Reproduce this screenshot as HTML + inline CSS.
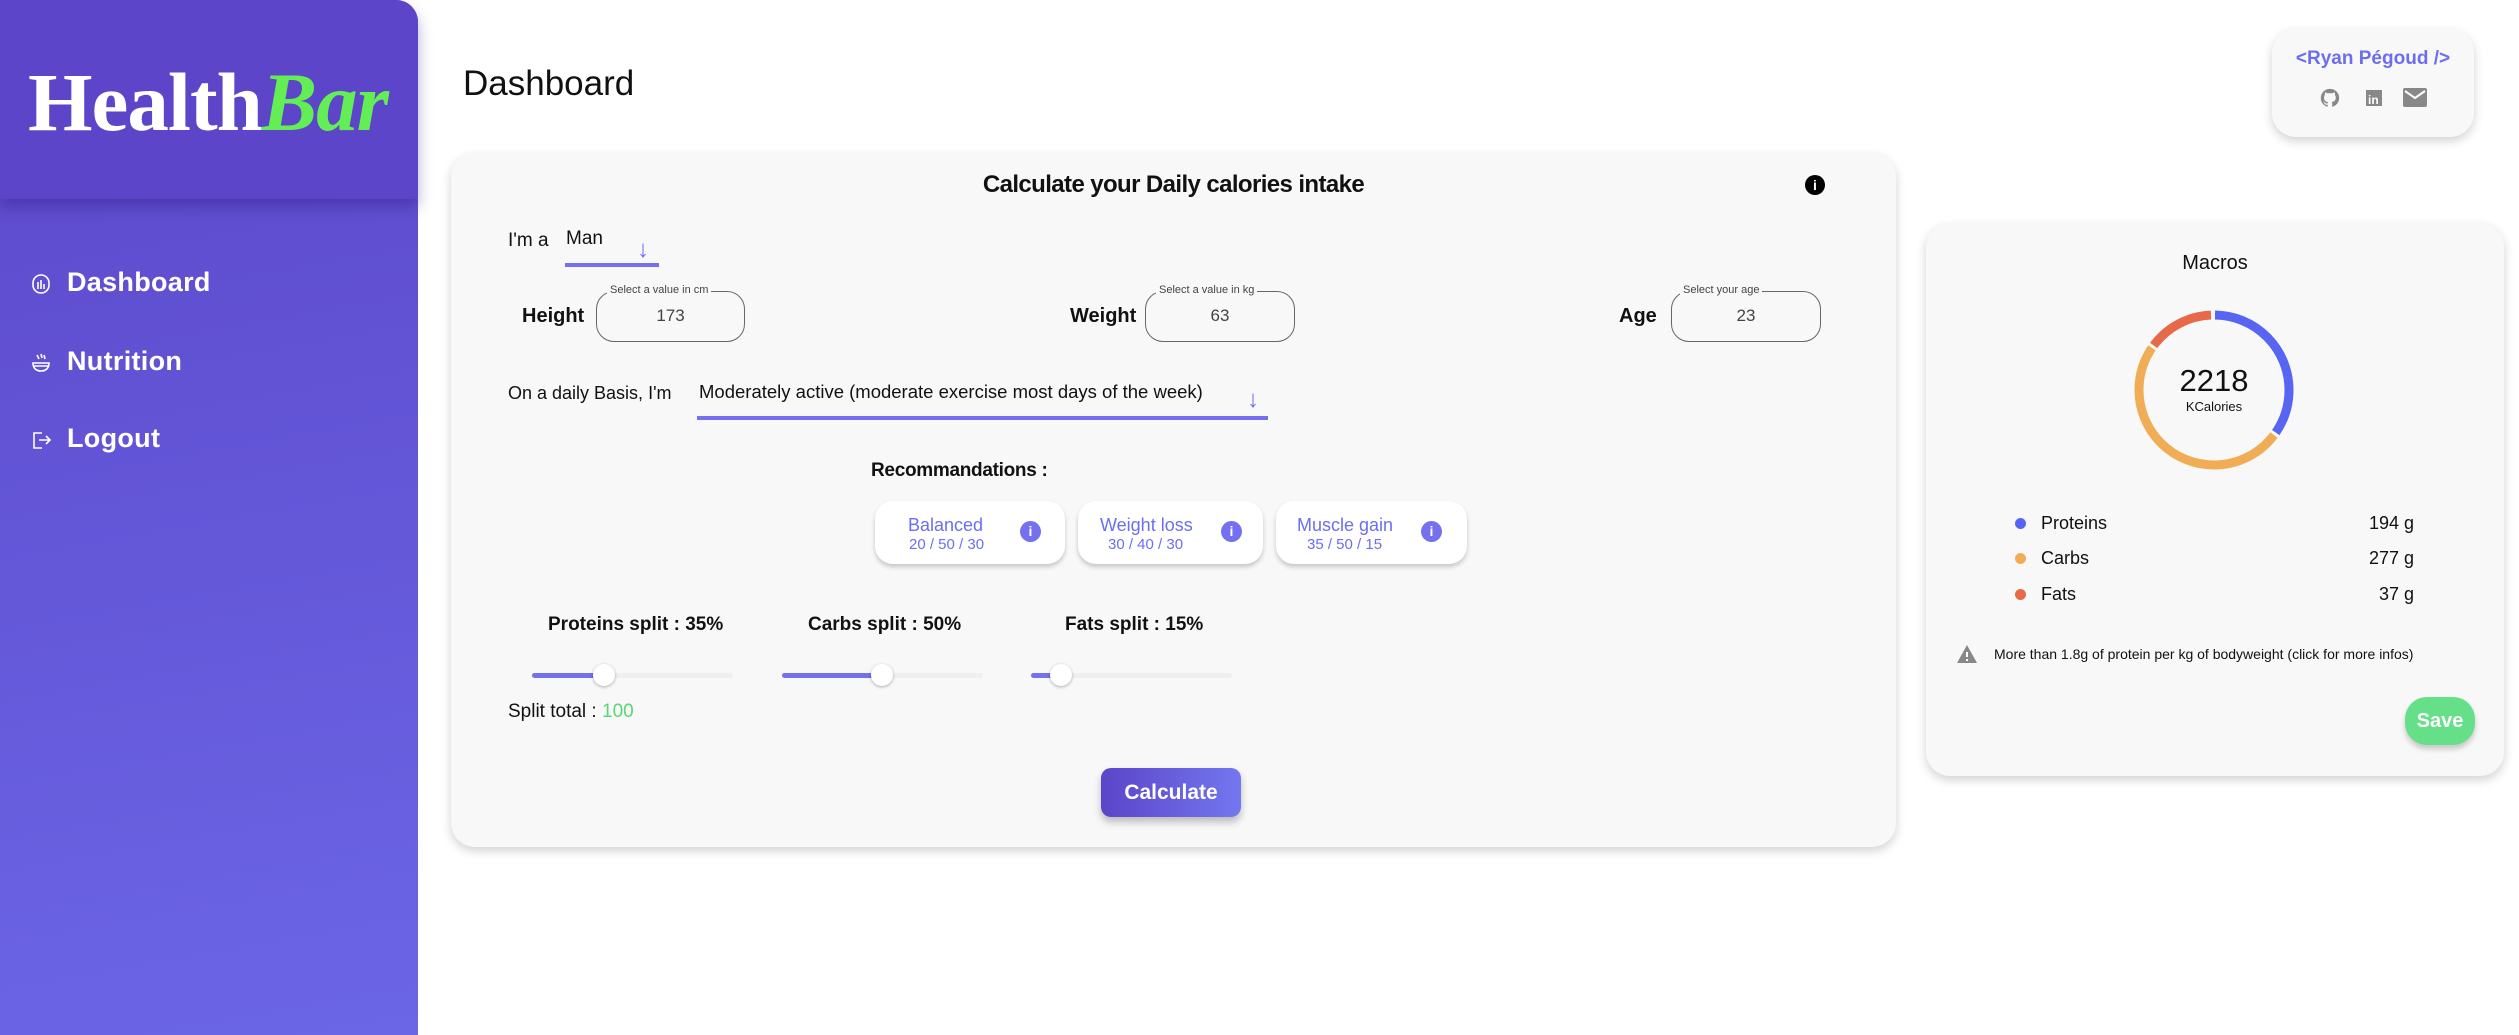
<!DOCTYPE html>
<html><head><meta charset="utf-8"><style>
*{margin:0;padding:0;box-sizing:border-box}
body{width:2519px;height:1035px;background:#fff;font-family:"Liberation Sans",sans-serif;position:relative;overflow:hidden;color:#111}
.a{position:absolute}
#side{left:0;top:0;width:418px;height:1035px;background:linear-gradient(170deg,#5c47c9,#6b66e6);border-radius:0 22px 0 0}
#head{left:0;top:0;width:418px;height:199px;background:#5c45c8;border-radius:0 22px 0 0;box-shadow:0 8px 14px rgba(40,20,120,.35)}
#logo{left:28px;top:54px;font-family:"Liberation Serif",serif;font-weight:bold;font-size:83px;color:#fff;letter-spacing:-1px}
#logo i{color:#63ee56}
.nav{left:67px;font-size:27px;color:#fff;font-weight:bold;letter-spacing:.3px}
.ni{left:30px;width:22px;height:22px}
.card{background:#f8f8f8;border-radius:24px;box-shadow:0 4px 10px rgba(0,0,0,.18)}
.lbl{font-size:19px}
.box{height:51px;border:1.5px solid #666;border-radius:18px;font-size:17px;color:#444;text-align:center;line-height:48px}
.cap{font-size:11px;color:#444;background:#f8f8f8;padding:0 3px;top:-9px;line-height:14px}
.chip{top:501px;height:63px;background:#fff;border-radius:18px;box-shadow:0 3px 5px rgba(0,0,0,.2);color:#6c6ef0}
.chip .t{position:absolute;top:14px;font-size:18px}
.chip .s{position:absolute;top:35px;font-size:15px}
.chip .ic{position:absolute;top:20px;width:21px;height:21px;border-radius:50%;background:#7470ee;color:#fff;font-size:14px;font-weight:bold;text-align:center;line-height:21px}
.sl{height:5px;background:#efefef;border-radius:3px;top:673px}
.sl b{position:absolute;left:0;top:0;height:5px;background:#7470ee;border-radius:3px}
.sl i{position:absolute;top:-9px;width:22px;height:22px;border-radius:50%;background:#fff;box-shadow:0 1px 3px rgba(0,0,0,.3)}
.spl{top:614px;font-size:19px;font-weight:bold}
.row{font-size:18px;font-weight:500}
.dot{width:11px;height:11px;border-radius:50%}
</style></head><body>
<div class="a" id="side"></div>
<div class="a" id="head"></div>
<div class="a" id="logo">Health<i>Bar</i></div>

<svg class="a ni" style="top:273px" viewBox="0 0 22 22" fill="none" stroke="#fff" stroke-width="1.6"><rect x="3" y="2" width="16" height="18" rx="8"/><path d="M8 9v7M11 7v9M14 11v5"/></svg>
<div class="a nav" style="top:267px">Dashboard</div>
<svg class="a ni" style="top:352px" viewBox="0 0 22 22" fill="none" stroke="#fff" stroke-width="1.6"><path d="M3 11h16c0 5-3 8-8 8s-8-3-8-8zM3 14h16M7 3l2 4M11 2l1 4M14 3l1 4"/></svg>
<div class="a nav" style="top:346px">Nutrition</div>
<svg class="a ni" style="top:429px" viewBox="0 0 22 22" fill="none" stroke="#fff" stroke-width="1.6"><path d="M12 4H4v15h8M9 11h11M16 7l4 4-4 4"/></svg>
<div class="a nav" style="top:423px">Logout</div>

<div class="a" style="left:463px;top:64px;font-size:35px">Dashboard</div>

<div class="a card" style="left:2272px;top:29px;width:202px;height:108px"></div>
<div class="a" style="left:2272px;top:48px;width:202px;text-align:center;color:#6c6ef0;font-weight:bold;font-size:19px">&lt;Ryan Pégoud /&gt;</div>
<svg class="a" style="left:2319px;top:87px" width="22" height="22" viewBox="0 0 24 24" fill="#888"><path d="M12 2a10 10 0 0 0-3.2 19.5c.5.1.7-.2.7-.5v-1.7c-2.8.6-3.4-1.3-3.4-1.3-.5-1.2-1.1-1.5-1.1-1.5-.9-.6.1-.6.1-.6 1 .1 1.5 1 1.5 1 .9 1.5 2.3 1.1 2.9.8.1-.6.3-1.1.6-1.3-2.2-.3-4.6-1.1-4.6-5 0-1.1.4-2 1-2.7-.1-.3-.4-1.3.1-2.7 0 0 .8-.3 2.8 1a9.6 9.6 0 0 1 5 0c1.9-1.3 2.8-1 2.8-1 .5 1.4.2 2.4.1 2.7.6.7 1 1.6 1 2.7 0 3.9-2.4 4.7-4.6 4.9.4.3.7.9.7 1.9V21c0 .3.2.6.7.5A10 10 0 0 0 12 2z"/></svg>
<svg class="a" style="left:2364px;top:88px" width="20" height="20" viewBox="0 0 20 20"><rect x="2" y="2" width="16" height="16" fill="#888"/><text x="4" y="16" font-size="12" font-weight="bold" fill="#fff" font-family="Liberation Sans">in</text></svg>
<svg class="a" style="left:2403px;top:88px" width="24" height="19" viewBox="0 0 24 19"><rect width="24" height="19" rx="2" fill="#888"/><path d="M2 3l10 7 10-7" stroke="#fff" stroke-width="2" fill="none"/></svg>

<div class="a card" style="left:451px;top:153px;width:1445px;height:694px"></div>
<div class="a" style="left:451px;top:171px;width:1445px;text-align:center;font-size:24px;font-weight:bold;letter-spacing:-.6px">Calculate your Daily calories intake</div>
<div class="a" style="left:1805px;top:175px;width:20px;height:20px;border-radius:50%;background:#000;color:#fff;font-size:14px;font-weight:bold;text-align:center;line-height:20px">i</div>

<div class="a lbl" style="left:508px;top:230px">I'm a</div>
<div class="a lbl" style="left:566px;top:228px">Man</div>
<div class="a" style="left:637px;top:236px;color:#6c6ef0;font-size:24px">↓</div>
<div class="a" style="left:565px;top:263px;width:94px;height:4px;background:#7470ee"></div>

<div class="a lbl" style="left:522px;top:305px;font-weight:bold;font-size:20px">Height</div>
<div class="a box" style="left:596px;top:291px;width:149px">173<span class="a cap" style="left:10px">Select a value in cm</span></div>
<div class="a lbl" style="left:1070px;top:305px;font-weight:bold;font-size:20px">Weight</div>
<div class="a box" style="left:1145px;top:291px;width:150px">63<span class="a cap" style="left:10px">Select a value in kg</span></div>
<div class="a lbl" style="left:1619px;top:305px;font-weight:bold;font-size:20px">Age</div>
<div class="a box" style="left:1671px;top:291px;width:150px">23<span class="a cap" style="left:8px">Select your age</span></div>

<div class="a lbl" style="left:508px;top:383px;font-size:18px">On a daily Basis, I'm</div>
<div class="a lbl" style="left:699px;top:381px;font-size:18.5px">Moderately active (moderate exercise most days of the week)</div>
<div class="a" style="left:1247px;top:386px;color:#6c6ef0;font-size:24px">↓</div>
<div class="a" style="left:697px;top:416px;width:571px;height:4px;background:#7470ee"></div>

<div class="a" style="left:871px;top:460px;font-size:19px;font-weight:bold;letter-spacing:-.3px">Recommandations :</div>
<div class="a chip" style="left:875px;width:190px"><span class="t" style="left:33px">Balanced</span><span class="s" style="left:34px">20 / 50 / 30</span><span class="ic" style="left:145px">i</span></div>
<div class="a chip" style="left:1078px;width:185px"><span class="t" style="left:22px">Weight loss</span><span class="s" style="left:30px">30 / 40 / 30</span><span class="ic" style="left:143px">i</span></div>
<div class="a chip" style="left:1276px;width:191px"><span class="t" style="left:21px">Muscle gain</span><span class="s" style="left:31px">35 / 50 / 15</span><span class="ic" style="left:145px">i</span></div>

<div class="a spl" style="left:548px">Proteins split : 35%</div>
<div class="a spl" style="left:808px">Carbs split : 50%</div>
<div class="a spl" style="left:1065px">Fats split : 15%</div>
<div class="a sl" style="left:532px;width:201px"><b style="width:72px"></b><i style="left:61px"></i></div>
<div class="a sl" style="left:782px;width:201px"><b style="width:100px"></b><i style="left:89px"></i></div>
<div class="a sl" style="left:1031px;width:201px"><b style="width:30px"></b><i style="left:19px"></i></div>
<div class="a" style="left:508px;top:701px;font-size:19px">Split total : <span style="color:#5cd672">100</span></div>

<div class="a" style="left:1101px;top:768px;width:140px;height:49px;border-radius:10px;background:linear-gradient(90deg,#5b45c8,#7377f0);box-shadow:0 5px 8px rgba(0,0,0,.25);color:#fff;font-size:21px;font-weight:bold;text-align:center;line-height:49px">Calculate</div>

<div class="a card" style="left:1926px;top:223px;width:578px;height:553px"></div>
<div class="a" style="left:1926px;top:252px;width:578px;text-align:center;font-size:20px;font-weight:500">Macros</div>
<svg class="a" style="left:2134px;top:310px" width="160" height="160" viewBox="0 0 160 160">
<g transform="rotate(-90 80 80)" fill="none" stroke-width="9">
<circle cx="80" cy="80" r="75" stroke="#5865f2" stroke-dasharray="162 310" stroke-dashoffset="-1"/>
<circle cx="80" cy="80" r="75" stroke="#f0ad55" stroke-dasharray="232 240" stroke-dashoffset="-166"/>
<circle cx="80" cy="80" r="75" stroke="#e8694a" stroke-dasharray="67 405" stroke-dashoffset="-401"/>
</g></svg>
<div class="a" style="left:2134px;top:363px;width:160px;text-align:center;font-size:31px;font-weight:500">2218</div>
<div class="a" style="left:2134px;top:399px;width:160px;text-align:center;font-size:13px">KCalories</div>

<div class="a dot" style="left:2015px;top:518px;background:#5865f2"></div>
<div class="a row" style="left:2041px;top:513px">Proteins</div><div class="a row" style="left:2300px;top:513px;width:114px;text-align:right">194 g</div>
<div class="a dot" style="left:2015px;top:553px;background:#f0ad55"></div>
<div class="a row" style="left:2041px;top:548px">Carbs</div><div class="a row" style="left:2300px;top:548px;width:114px;text-align:right">277 g</div>
<div class="a dot" style="left:2015px;top:589px;background:#e8694a"></div>
<div class="a row" style="left:2041px;top:584px">Fats</div><div class="a row" style="left:2300px;top:584px;width:114px;text-align:right">37 g</div>

<svg class="a" style="left:1956px;top:644px" width="22" height="20" viewBox="0 0 22 20"><path d="M11 1L21 19H1z" fill="#888"/><path d="M11 8v5M11 15v2" stroke="#fff" stroke-width="2"/></svg>
<div class="a" style="left:1994px;top:646px;font-size:14px">More than 1.8g of protein per kg of bodyweight (click for more infos)</div>

<div class="a" style="left:2405px;top:697px;width:70px;height:48px;border-radius:22px;background:#66e088;box-shadow:0 4px 6px rgba(0,0,0,.2);color:#fff;font-weight:bold;font-size:20px;text-align:center;line-height:48px">Save</div>
</body></html>
